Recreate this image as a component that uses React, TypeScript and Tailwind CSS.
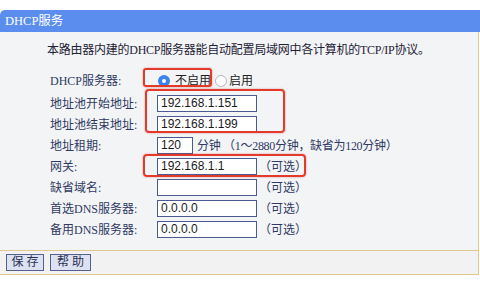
const cjk = '"Liberation Serif","Noto Sans CJK SC",serif';
const sans = '"Liberation Sans","Noto Sans CJK SC",sans-serif';

const Field = ({ value, w = "w-[100px]" }: { value?: string; w?: string }) => (
  <div
    className={`${w} h-[17px] border border-[#4b5a8f] bg-white pl-[3px] text-[12px] leading-[15px] text-[#1a1a1a]`}
    style={{ fontFamily: sans }}
  >
    {value}
  </div>
);

const Row = ({ label, children }: { label: string; children: React.ReactNode }) => (
  <div className="flex h-[21px] items-center">
    <div className="w-[157px] pl-[50px] shrink-0 text-[12px] text-[#2f3a63] whitespace-nowrap">
      {label}
    </div>
    <div className="flex items-center w-[300px]">{children}</div>
  </div>
);

const Optional = () => (
  <span className="ml-[2px] text-[12px] text-[#2f3a63]">（可选）</span>
);

export default function App() {
  return (
    <div
      className="relative w-[480px] h-[300px] bg-white overflow-hidden"
      style={{ fontFamily: cjk }}
    >
      <div className="h-[10px]" />
      <div className="h-[22px] bg-[#5b8def] rounded-tl-[5px] px-[5px] flex items-center text-white text-[12.5px]">
        DHCP服务
      </div>
      <div className="w-[479px] bg-[#f3f4f6] border-r border-b border-[#e2c88e] pb-[10px]">
        <div className="pt-[10px] pl-[47px] text-[12px] leading-[16px] tracking-[-0.25px] text-[#1e2235] whitespace-nowrap">
          本路由器内建的DHCP服务器能自动配置局域网中各计算机的TCP/IP协议。
        </div>
        <div className="mt-[11px] flex h-[24px] items-center">
          <div className="w-[157px] pl-[50px] shrink-0 text-[12px] text-[#2f3a63] whitespace-nowrap">
            DHCP服务器:
          </div>
          <div className="flex items-center text-[12px] text-[#222]">
            <span className="ml-[1px] w-[12px] h-[12px] rounded-full bg-[#3b82f0] flex items-center justify-center">
              <span className="w-[4px] h-[4px] rounded-full bg-white" />
            </span>
            <span className="ml-[5px]">不启用</span>
            <span className="ml-[4px] w-[12px] h-[12px] rounded-full bg-white border border-[#b8b8b8]" />
            <span className="ml-[2px]">启用</span>
          </div>
        </div>
        <Row label="地址池开始地址:">
          <Field value="192.168.1.151" />
        </Row>
        <Row label="地址池结束地址:">
          <Field value="192.168.1.199" />
        </Row>
        <Row label="地址租期:">
          <Field value="120" w="w-[36px]" />
          <span className="ml-[4px] text-[12px] tracking-[-0.3px] text-[#2f3a63] whitespace-nowrap">
            分钟 （1～2880分钟，缺省为120分钟）
          </span>
        </Row>
        <Row label="网关:">
          <Field value="192.168.1.1" />
          <Optional />
        </Row>
        <Row label="缺省域名:">
          <Field />
          <Optional />
        </Row>
        <Row label="首选DNS服务器:">
          <Field value="0.0.0.0" />
          <Optional />
        </Row>
        <Row label="备用DNS服务器:">
          <Field value="0.0.0.0" />
          <Optional />
        </Row>
      </div>
      <div className="w-[479px] h-[24px] bg-[#f2f2f2] border-b border-r border-[#e2c88e] flex items-center gap-[6px] pl-[6px]">
        <button className="w-[38px] h-[17px] pl-[3px] bg-[#dde2f3] border border-[#55608f] text-[12px] leading-[15px] text-[#2a3050] tracking-[3px]">
          保存
        </button>
        <button className="w-[41px] h-[17px] pl-[3px] bg-[#dde2f3] border border-[#55608f] text-[12px] leading-[15px] text-[#2a3050] tracking-[3px]">
          帮助
        </button>
      </div>

      {/* red highlight annotations */}
      <div className="absolute left-[143px] top-[68px] w-[69px] h-[19px] border-2 border-[#e23b2c] rounded-[3px] shadow-[0_0_2px_rgba(200,40,30,0.5)]" />
      <div className="absolute left-[145px] top-[89px] w-[140px] h-[44px] border-2 border-[#e23b2c] rounded-[4px] shadow-[0_0_2px_rgba(200,40,30,0.5)]" />
      <div className="absolute left-[143px] top-[154px] w-[163px] h-[23px] border-2 border-[#e23b2c] rounded-[4px] shadow-[0_0_2px_rgba(200,40,30,0.5)]" />
    </div>
  );
}
